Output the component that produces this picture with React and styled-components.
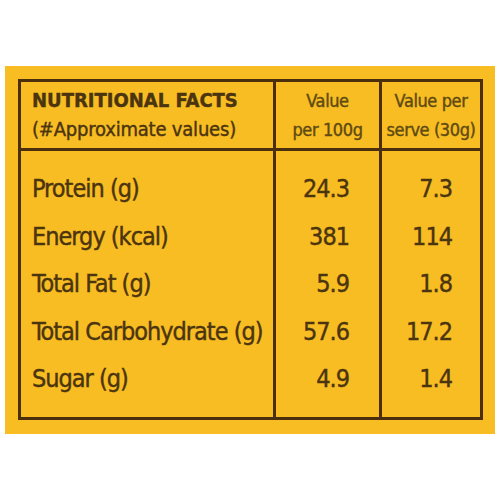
import styled, { createGlobalStyle } from "styled-components";

const GlobalStyle = createGlobalStyle`
  body {
    margin: 0;
    background: #ffffff;
    font-family: "DejaVu Sans Condensed", "Liberation Sans Narrow", "Liberation Sans", sans-serif;
  }
`;

const Page = styled.div`
  width: 500px;
  height: 500px;
  padding: 66px 5px 0 5px;
  box-sizing: border-box;
`;

const Panel = styled.section`
  background: #f8bd22;
  padding: 13px 15px 15px 13px;
  height: 368px;
  box-sizing: border-box;
`;

const Table = styled.table`
  border-collapse: collapse;
  width: 462px;
  color: #4b3410;
  table-layout: fixed;
`;

const HeadCell = styled.th`
  border: 3px solid #4b2f0c;
  height: 66px;
  padding: 0;
  font-weight: normal;
  font-size: 18px;
  line-height: 29px;
  letter-spacing: -0.4px;
  color: ${(p) => (p.$left ? "#4b3410" : "#5e4a12")};
  -webkit-text-stroke: 0.4px currentColor;
  text-align: ${(p) => (p.$left ? "left" : "center")};
  padding-left: ${(p) => (p.$left ? "11px" : "0")};
  vertical-align: middle;
  white-space: nowrap;
`;

const Title = styled.div`
  font-weight: bold;
  font-size: 20px;
  letter-spacing: 0px;
`;

const Note = styled.div`
  font-size: 20px;
  letter-spacing: -0.2px;
`;

const Body = styled.tbody`
  & tr:first-child td {
    padding-top: 14px;
  }
  & tr:last-child td {
    padding-bottom: 14px;
  }
`;

const Cell = styled.td`
  border-left: 3px solid #4b2f0c;
  border-right: 3px solid #4b2f0c;
  height: 47.5px;
  padding: 0;
  font-size: 25px;
  letter-spacing: -1px;
  -webkit-text-stroke: 0.4px currentColor;
  white-space: nowrap;
  text-align: ${(p) => (p.$left ? "left" : "right")};
  padding-left: ${(p) => (p.$left ? "11px" : "0")};
  padding-right: ${(p) => p.$pad || "0"};
  vertical-align: middle;
`;

const LastRow = styled.tr`
  border-bottom: 3px solid #4b2f0c;
`;

const rows = [
  ["Protein (g)", "24.3", "7.3"],
  ["Energy (kcal)", "381", "114"],
  ["Total Fat (g)", "5.9", "1.8"],
  ["Total Carbohydrate (g)", "57.6", "17.2"],
  ["Sugar (g)", "4.9", "1.4"],
];

export default function App() {
  return (
    <Page>
      <GlobalStyle />
      <Panel>
        <Table>
          <colgroup>
            <col style={{ width: 255 }} />
            <col style={{ width: 106 }} />
            <col style={{ width: 101 }} />
          </colgroup>
          <thead>
            <tr>
              <HeadCell $left>
                <Title>NUTRITIONAL FACTS</Title>
                <Note>(#Approximate values)</Note>
              </HeadCell>
              <HeadCell>
                Value
                <br />
                per 100g
              </HeadCell>
              <HeadCell>
                Value per
                <br />
                serve (30g)
              </HeadCell>
            </tr>
          </thead>
          <Body>
            {rows.map((r, i) => {
              const Row = i === rows.length - 1 ? LastRow : "tr";
              return (
                <Row key={r[0]}>
                  <Cell $left>{r[0]}</Cell>
                  <Cell $pad="30px">{r[1]}</Cell>
                  <Cell $pad="28px">{r[2]}</Cell>
                </Row>
              );
            })}
          </Body>
        </Table>
      </Panel>
    </Page>
  );
}
